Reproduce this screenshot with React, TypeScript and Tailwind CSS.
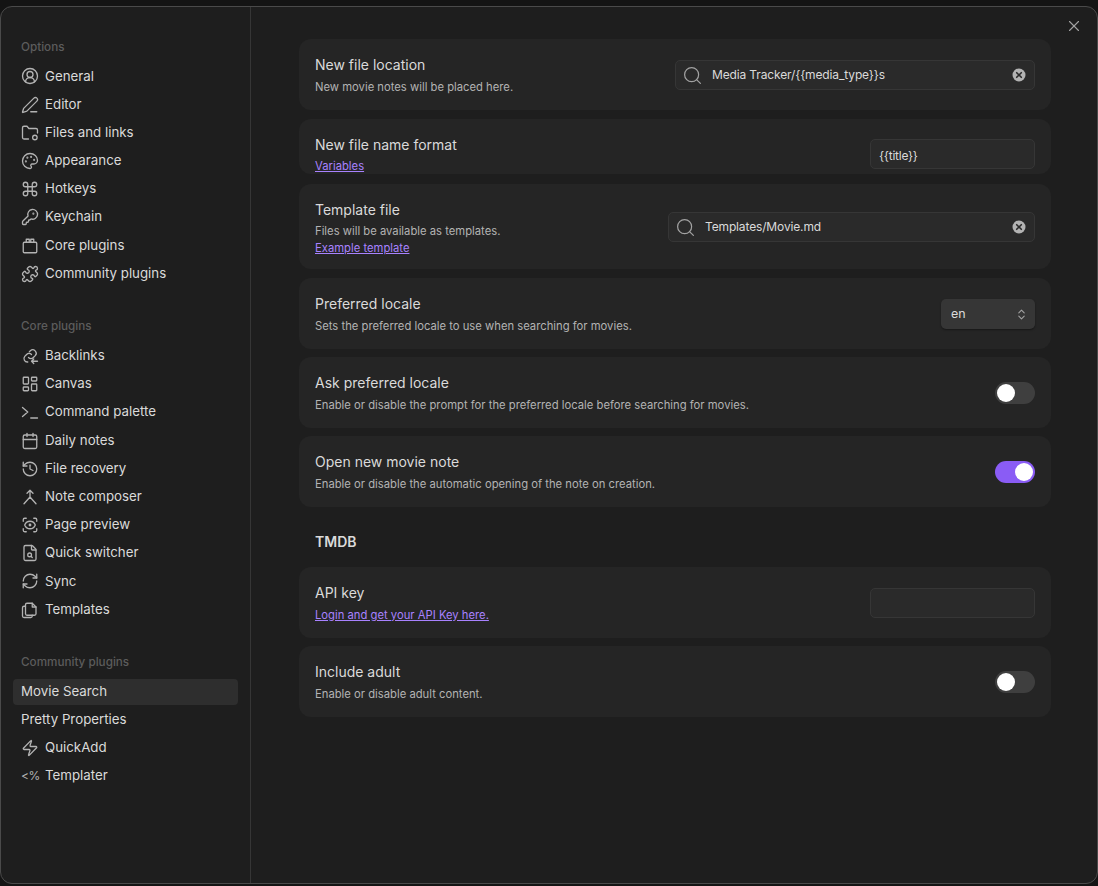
import type { ReactNode } from 'react';
import {
  CircleUserRound, PenLine, Palette, Command, KeyRound, Puzzle, LayoutDashboard,
  Calendar, History, ScanEye, FileSearch, RefreshCw, Zap, Search, X, ChevronsUpDown,
} from 'lucide-react';

const iconClass = 'h-[18px] w-[18px] shrink-0 text-[#b3b3b3]';
const stroke = { fill: 'none', stroke: 'currentColor', strokeWidth: 1.75, strokeLinecap: 'round', strokeLinejoin: 'round' } as const;

function FolderDot() {
  return (
    <svg viewBox="0 0 24 24" className={iconClass} {...stroke}>
      <path d="M10 20H4a2 2 0 0 1-2-2V5a2 2 0 0 1 2-2h4l2.5 3H20a2 2 0 0 1 2 2v4" />
      <circle cx="18.500" cy="18" r="3" />
    </svg>
  );
}

function CorePlugins() {
  return (
    <svg viewBox="0 0 24 24" className={iconClass} {...stroke}>
      <rect x="3" y="7" width="18" height="14" rx="1.5" />
      <path d="M7 7V3h4v4M13 7V3h4v4" />
    </svg>
  );
}

function Backlinks() {
  return (
    <svg viewBox="0 0 24 24" className={iconClass} {...stroke}>
      <path d="M10 14a4.500 4.500 0 0 0 6.500 0l2.500-2.500a4.600 4.600 0 0 0-6.500-6.500L11 6.500" />
      <path d="M14 10a4.500 4.500 0 0 0-6.500 0L5 12.500A4.600 4.600 0 0 0 9 20" />
      <path d="M22 19h-8M17 16l-3 3 3 3" />
    </svg>
  );
}

function TerminalIcon() {
  return (
    <svg viewBox="0 0 24 24" className={iconClass} {...stroke}>
      <path d="M2 6l7 6-7 6M13 20h9" />
    </svg>
  );
}

function NoteComposer() {
  return (
    <svg viewBox="0 0 24 24" className={iconClass} {...stroke}>
      <path d="M8 7l4-4 4 4M12 3v9M12 12l-8 9M12 12l8 9" />
    </svg>
  );
}

function TemplatesIcon() {
  return (
    <svg viewBox="0 0 24 24" className={iconClass} {...stroke}>
      <path d="M8 3h7l5 5v9a2 2 0 0 1-2 2H8a2 2 0 0 1-2-2V5a2 2 0 0 1 2-2z" />
      <path d="M15 3v5h5" />
      <path d="M6 7H4a2 2 0 0 0-2 2v11a2 2 0 0 0 2 2h9a2 2 0 0 0 2-2v-1" />
    </svg>
  );
}

function ClearIcon() {
  return (
    <svg viewBox="0 0 14 14" className="h-[14px] w-[14px] shrink-0">
      <circle cx="7" cy="7" r="6.5" fill="#b3b3b3" />
      <path d="M4.700 4.700l4.600 4.600M9.300 4.700l-4.600 4.600" stroke="#2a2a2a" strokeWidth="1.600" strokeLinecap="round" />
    </svg>
  );
}

type NavEntry = { label: string; icon?: ReactNode; active?: boolean };

const optionItems: NavEntry[] = [
  { label: 'General', icon: <CircleUserRound className={iconClass} strokeWidth={1.75} /> },
  { label: 'Editor', icon: <PenLine className={iconClass} strokeWidth={1.75} /> },
  { label: 'Files and links', icon: <FolderDot /> },
  { label: 'Appearance', icon: <Palette className={iconClass} strokeWidth={1.75} /> },
  { label: 'Hotkeys', icon: <Command className={iconClass} strokeWidth={1.75} /> },
  { label: 'Keychain', icon: <KeyRound className={iconClass} strokeWidth={1.75} /> },
  { label: 'Core plugins', icon: <CorePlugins /> },
  { label: 'Community plugins', icon: <Puzzle className={iconClass} strokeWidth={1.75} /> },
];

const coreItems: NavEntry[] = [
  { label: 'Backlinks', icon: <Backlinks /> },
  { label: 'Canvas', icon: <LayoutDashboard className={iconClass} strokeWidth={1.75} /> },
  { label: 'Command palette', icon: <TerminalIcon /> },
  { label: 'Daily notes', icon: <Calendar className={iconClass} strokeWidth={1.75} /> },
  { label: 'File recovery', icon: <History className={iconClass} strokeWidth={1.75} /> },
  { label: 'Note composer', icon: <NoteComposer /> },
  { label: 'Page preview', icon: <ScanEye className={iconClass} strokeWidth={1.75} /> },
  { label: 'Quick switcher', icon: <FileSearch className={iconClass} strokeWidth={1.75} /> },
  { label: 'Sync', icon: <RefreshCw className={iconClass} strokeWidth={1.75} /> },
  { label: 'Templates', icon: <TemplatesIcon /> },
];

const communityItems: NavEntry[] = [
  { label: 'Movie Search', active: true },
  { label: 'Pretty Properties' },
  { label: 'QuickAdd', icon: <Zap className={iconClass} strokeWidth={1.75} /> },
  { label: 'Templater', icon: <span className="w-[18px] shrink-0 text-[12px] tracking-[-0.4px] whitespace-nowrap text-[#b3b3b3]">{'<%'}</span> },
];

function NavGroup({ title, items, className }: { title: string; items: NavEntry[]; className: string }) {
  return (
    <div className={className}>
      <div className="mb-[8.4px] h-[16px] pl-[20px] text-[11.7px] leading-[16px] font-medium text-[#5c5c5c]">{title}</div>
      {items.map((item) => (
        <div
          key={item.label}
          className={`mr-[12px] mb-[2px] ml-[12px] flex h-[26.2px] items-center gap-[6px] rounded-[4px] pl-[8px] text-[13.3px] text-[#dadada] ${item.active ? 'bg-[#2e2e2e]' : ''}`}
        >
          {item.icon}
          <span>{item.label}</span>
        </div>
      ))}
    </div>
  );
}

function Row({ title, desc, link, descClass = 'mt-[4px]', linkClass = '', className, children }: {
  title: string; desc?: string; link?: string; descClass?: string; linkClass?: string; className: string; children: ReactNode;
}) {
  return (
    <div className={`flex items-start justify-between rounded-[12px] bg-[#252525] px-[16px] ${className}`}>
      <div className="pt-[15px]">
        <div className="text-[14px] leading-[21px] text-[#dadada]">{title}</div>
        {desc && <div className={`text-[11.25px] leading-[16px] text-[#b3b3b3] ${descClass}`}>{desc}</div>}
        {link && <a className={`block text-[11.25px] leading-[16px] text-[#a882ff] underline ${linkClass}`}>{link}</a>}
      </div>
      {children}
    </div>
  );
}

function PathInput({ value, className }: { value: string; className: string }) {
  return (
    <div className={`flex h-[30px] items-center rounded-[5px] border border-[#363636] bg-[#2a2a2a] pr-[8px] pl-[6px] ${className}`}>
      <Search className="h-[21px] w-[21px] shrink-0 text-[#a3a3a3]" strokeWidth={1.4} />
      <span className="ml-[9px] flex-1 text-[12px] tracking-[-0.14px] text-[#dadada]">{value}</span>
      <ClearIcon />
    </div>
  );
}

function Toggle({ on }: { on?: boolean }) {
  return (
    <div className={`mt-[25px] flex h-[22px] w-[40px] items-center rounded-full px-[2px] ${on ? 'justify-end bg-[#8a5cf5]' : 'justify-start bg-[#3f3f3f]'}`}>
      <div className="h-[18px] w-[18px] rounded-full bg-white" />
    </div>
  );
}

export default function App() {
  return (
    <div className="h-[886px] w-[1098px] overflow-hidden bg-[#141414] pt-[6px] font-['Inter',sans-serif]">
      <div className="relative flex h-[878px] w-[1098px] rounded-[12px] border border-[#4a4a4a] bg-[#1e1e1e]">
        <X className="absolute top-[10px] right-[14px] h-[18px] w-[18px] text-[#a3a3a3]" strokeWidth={1.5} />
        <aside className="w-[250px] shrink-0 border-r border-[#363636]">
          <NavGroup title="Options" items={optionItems} className="pt-[32px]" />
          <NavGroup title="Core plugins" items={coreItems} className="mt-[31.6px]" />
          <NavGroup title="Community plugins" items={communityItems} className="mt-[31.6px]" />
        </aside>
        <main className="flex-1 pt-[32px] pl-[48px]">
          <div className="w-[752px]">
            <Row title="New file location" desc="New movie notes will be placed here." className="h-[71px]">
              <PathInput value="Media Tracker/{{media_type}}s" className="mt-[21px] w-[360px]" />
            </Row>
            <Row title="New file name format" link="Variables" linkClass="mt-[3px]" className="mt-[9px] h-[55px]">
              <div className="mt-[20px] flex h-[30px] w-[165px] items-center rounded-[5px] border border-[#363636] bg-[#2a2a2a] pt-[3px] pl-[8px] text-[12px] tracking-[-0.25px] text-[#dadada]">{'{{title}}'}</div>
            </Row>
            <Row title="Template file" desc="Files will be available as templates." descClass="mt-[3px]" link="Example template" linkClass="mt-px" className="mt-[10px] h-[85px]">
              <PathInput value="Templates/Movie.md" className="mt-[28px] w-[367px]" />
            </Row>
            <Row title="Preferred locale" desc="Sets the preferred locale to use when searching for movies." className="mt-[9px] h-[71px]">
              <div className="mt-[21px] flex h-[30px] w-[94px] items-center justify-between rounded-[5px] bg-[#363636] pr-[7px] pl-[10px] text-[12.5px] text-[#dadada] shadow-[0_1px_2px_rgba(0,0,0,0.4)]">
                en
                <ChevronsUpDown className="h-[13px] w-[13px] text-[#a3a3a3]" />
              </div>
            </Row>
            <Row title="Ask preferred locale" desc="Enable or disable the prompt for the preferred locale before searching for movies." className="mt-[8px] h-[71px]">
              <Toggle />
            </Row>
            <Row title="Open new movie note" desc="Enable or disable the automatic opening of the note on creation." className="mt-[8px] h-[71px]">
              <Toggle on />
            </Row>
            <h3 className="mt-[24px] h-[36px] pl-[16px] text-[14px] leading-[21px] font-semibold text-[#dadada]">TMDB</h3>
            <Row title="API key" link="Login and get your API Key here." linkClass="mt-[4px]" className="h-[71px]">
              <div className="mt-[21px] h-[30px] w-[165px] rounded-[5px] border border-[#363636] bg-[#2a2a2a]" />
            </Row>
            <Row title="Include adult" desc="Enable or disable adult content." className="mt-[8px] h-[71px]">
              <Toggle />
            </Row>
          </div>
        </main>
      </div>
    </div>
  );
}
